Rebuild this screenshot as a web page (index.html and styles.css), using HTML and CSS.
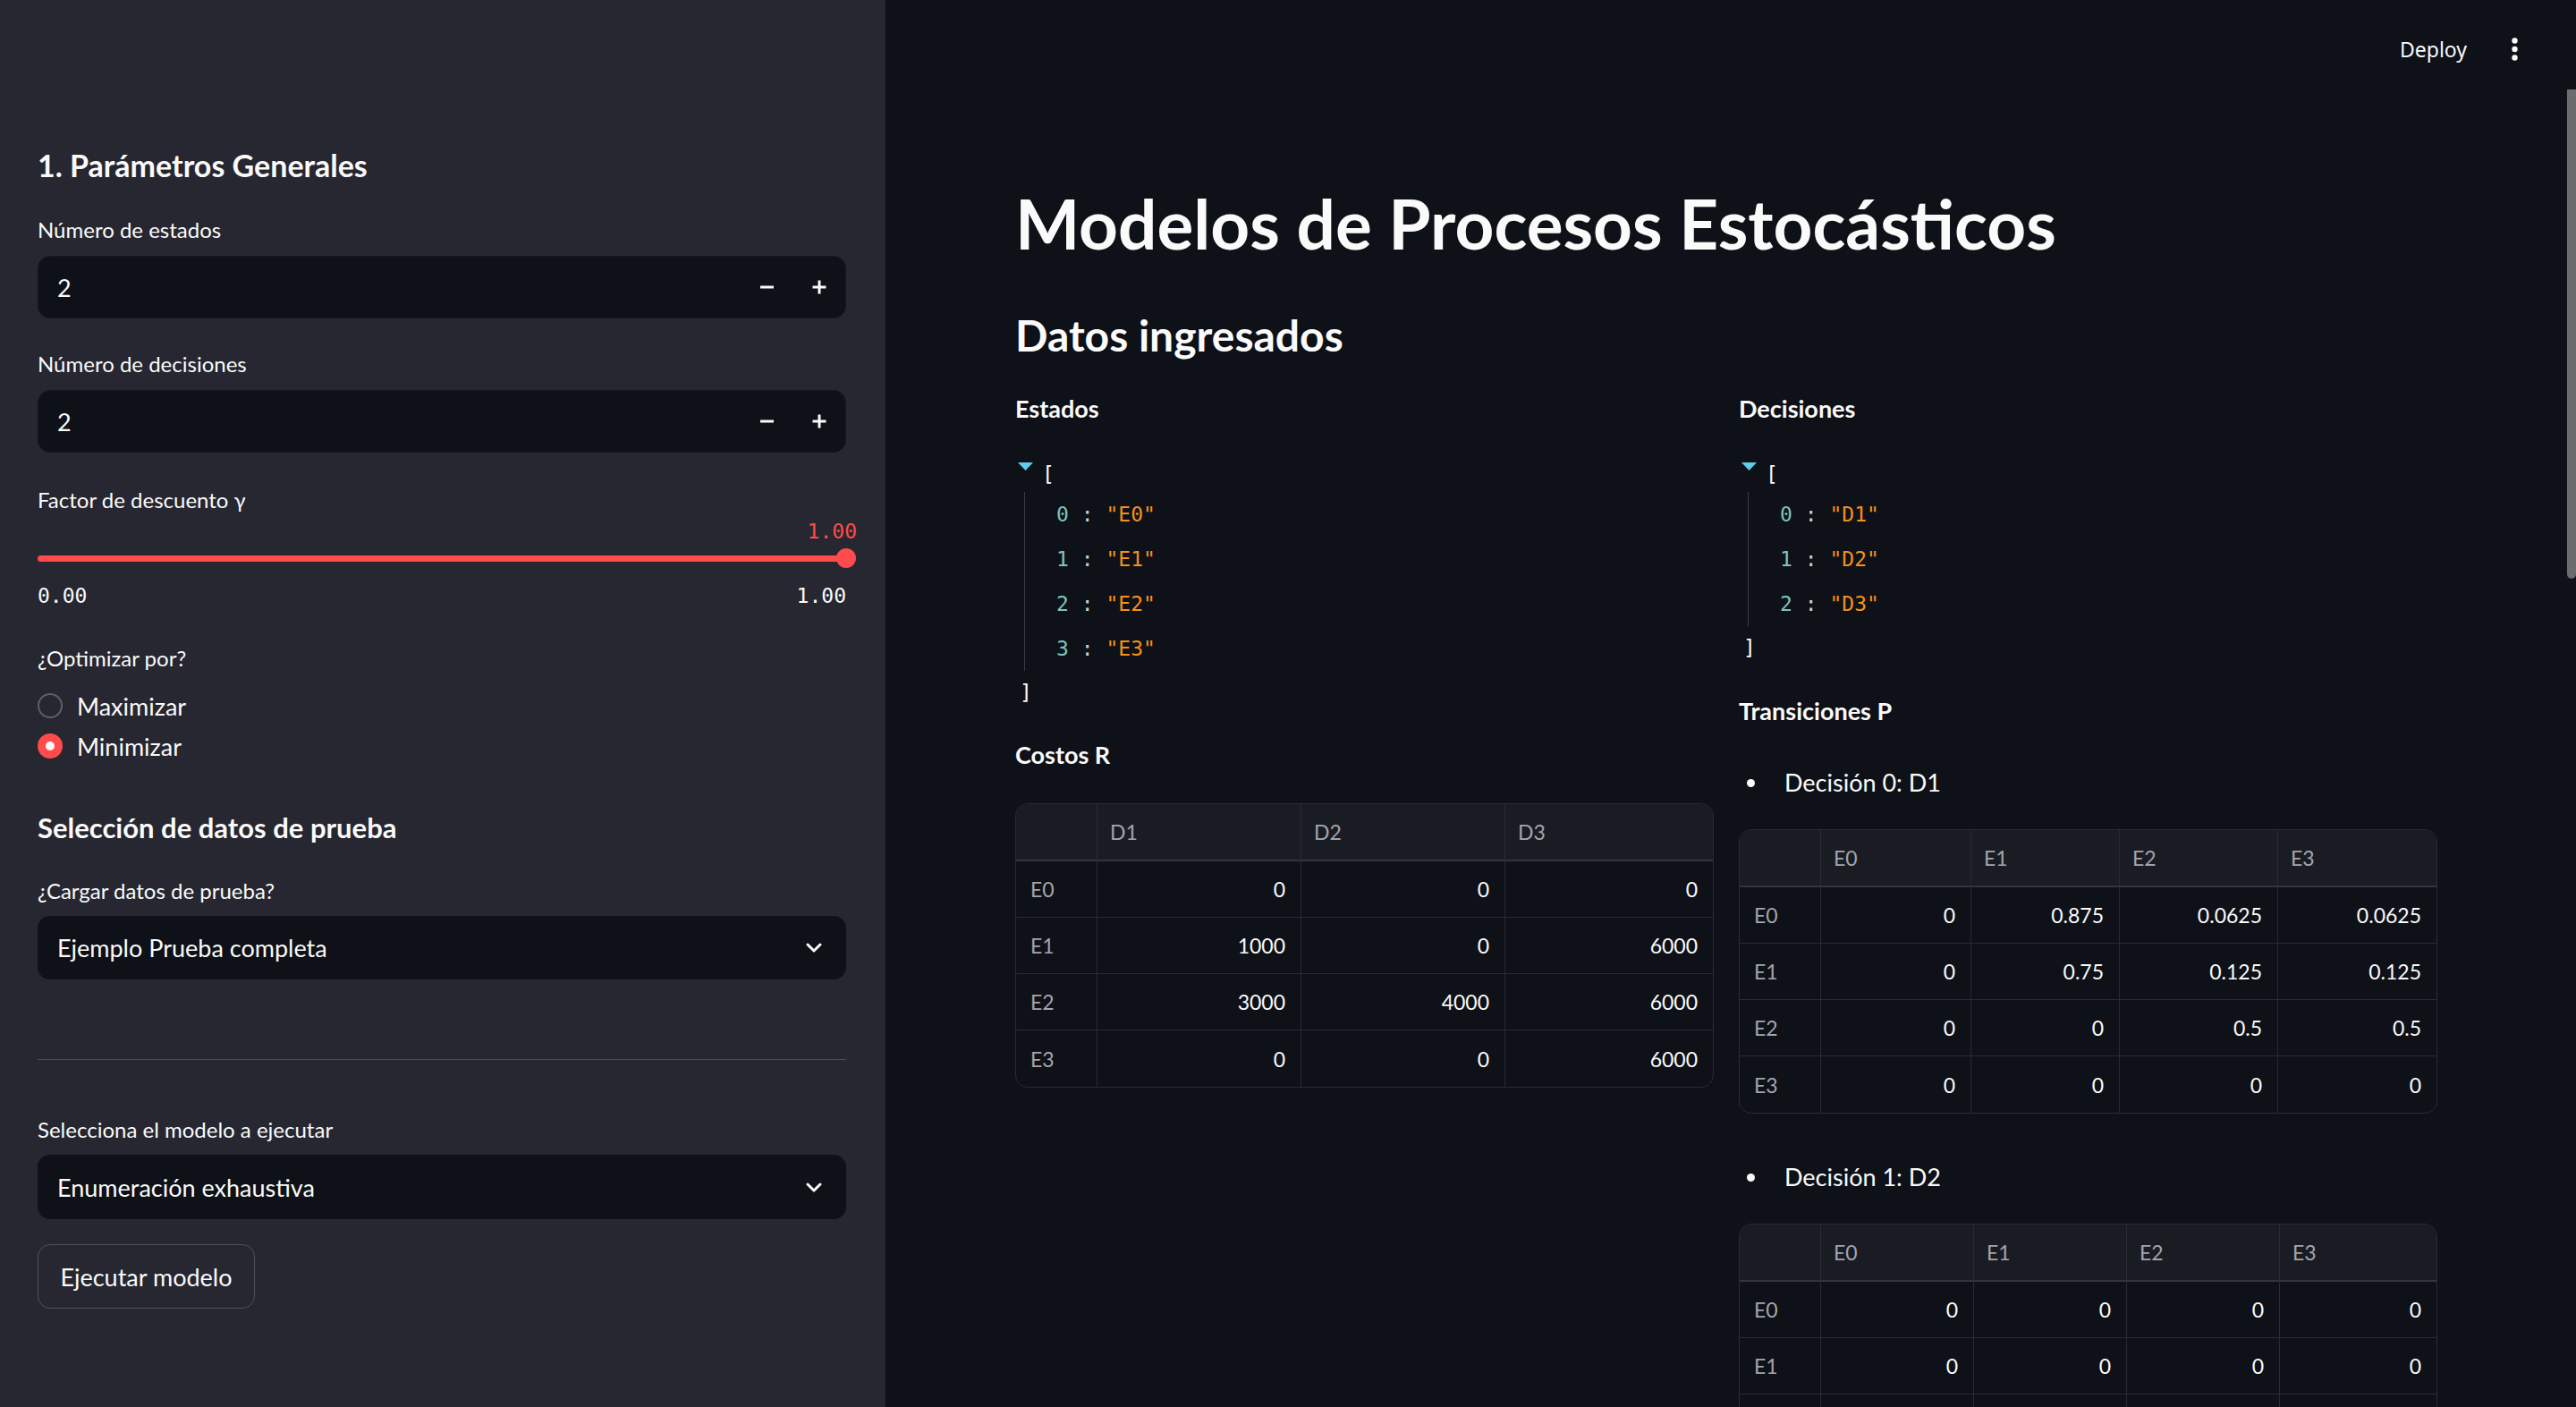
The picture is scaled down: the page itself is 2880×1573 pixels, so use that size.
FILE: index.html
```html
<!DOCTYPE html>
<html lang="es">
<head>
<meta charset="utf-8">
<title>Modelos de Procesos Estocásticos</title>
<link rel="stylesheet" href="styles.css">
</head>
<body>
<aside class="sidebar">
  <h2 class="sb-heading sb-heading-1">1. Parámetros Generales</h2>

  <div class="lbl lbl-1">Número de estados</div>
  <div class="num-input ni-1">
    <span class="num-value">2</span>
    <span class="step"><svg width="16" height="4" viewBox="0 0 16 4"><rect x="0" y="0.5" width="15" height="3" fill="#fafafa"/></svg></span>
    <span class="step"><svg width="16" height="16" viewBox="0 0 16 16"><rect x="0.5" y="6.5" width="15" height="3" fill="#fafafa"/><rect x="6.5" y="0.5" width="3" height="15" fill="#fafafa"/></svg></span>
  </div>

  <div class="lbl lbl-2">Número de decisiones</div>
  <div class="num-input ni-2">
    <span class="num-value">2</span>
    <span class="step"><svg width="16" height="4" viewBox="0 0 16 4"><rect x="0" y="0.5" width="15" height="3" fill="#fafafa"/></svg></span>
    <span class="step"><svg width="16" height="16" viewBox="0 0 16 16"><rect x="0.5" y="6.5" width="15" height="3" fill="#fafafa"/><rect x="6.5" y="0.5" width="3" height="15" fill="#fafafa"/></svg></span>
  </div>

  <div class="lbl lbl-3">Factor de descuento γ</div>
  <div class="slider">
    <div class="slider-value">1.00</div>
    <div class="track"><span class="track-bar"></span><span class="thumb"></span></div>
    <div class="ticks"><span>0.00</span><span>1.00</span></div>
  </div>

  <div class="lbl lbl-4">¿Optimizar por?</div>
  <div class="radio radio-1"><span class="radio-circle"></span><span>Maximizar</span></div>
  <div class="radio radio-2"><span class="radio-circle on"><span class="radio-dot"></span></span><span>Minimizar</span></div>

  <h3 class="sb-heading sb-heading-2">Selección de datos de prueba</h3>
  <div class="lbl lbl-5">¿Cargar datos de prueba?</div>
  <div class="select sel-1">
    <span>Ejemplo Prueba completa</span>
    <svg width="18" height="11" viewBox="0 0 18 11"><path d="M2 2 L9 9 L16 2" fill="none" stroke="#fafafa" stroke-width="3" stroke-linecap="round" stroke-linejoin="round"/></svg>
  </div>

  <div class="divider"></div>

  <div class="lbl lbl-6">Selecciona el modelo a ejecutar</div>
  <div class="select sel-2">
    <span>Enumeración exhaustiva</span>
    <svg width="18" height="11" viewBox="0 0 18 11"><path d="M2 2 L9 9 L16 2" fill="none" stroke="#fafafa" stroke-width="3" stroke-linecap="round" stroke-linejoin="round"/></svg>
  </div>

  <div class="btn">Ejecutar modelo</div>
</aside>

<main class="main">
  <header class="topbar">
    <span class="deploy">Deploy</span>
    <svg class="kebab" width="7" height="27" viewBox="0 0 7 27"><circle cx="3.5" cy="3.5" r="3.2" fill="#fafafa"/><circle cx="3.5" cy="13" r="3.2" fill="#fafafa"/><circle cx="3.5" cy="22.5" r="3.2" fill="#fafafa"/></svg>
  </header>

  <div class="content">
    <h1 class="title">Modelos de Procesos Estocásticos</h1>
    <h2 class="h2">Datos ingresados</h2>

    <div class="cols">
      <div class="col">
        <div class="sub">Estados</div>
        <div class="json">
          <div class="json-open"><svg class="tri" width="17" height="9" viewBox="0 0 17 9"><path d="M0 0 H17 L8.5 9 Z" fill="#5ecfea"/></svg><span class="br">[</span></div>
          <div class="json-items">
            <div class="ji"><span class="k">0</span> <span class="cl">:</span> <span class="s">"E0"</span></div>
            <div class="ji"><span class="k">1</span> <span class="cl">:</span> <span class="s">"E1"</span></div>
            <div class="ji"><span class="k">2</span> <span class="cl">:</span> <span class="s">"E2"</span></div>
            <div class="ji"><span class="k">3</span> <span class="cl">:</span> <span class="s">"E3"</span></div>
          </div>
          <div class="json-close">]</div>
        </div>

        <div class="sub sub-gap">Costos R</div>
        <div class="df df-costos gap-costos">
          <div class="c h"></div><div class="c h">D1</div><div class="c h">D2</div><div class="c h last">D3</div>
          <div class="c i">E0</div><div class="c">0</div><div class="c">0</div><div class="c last">0</div>
          <div class="c i">E1</div><div class="c">1000</div><div class="c">0</div><div class="c last">6000</div>
          <div class="c i">E2</div><div class="c">3000</div><div class="c">4000</div><div class="c last">6000</div>
          <div class="c i end">E3</div><div class="c end">0</div><div class="c end">0</div><div class="c last end">6000</div>
        </div>
      </div>

      <div class="col">
        <div class="sub">Decisiones</div>
        <div class="json">
          <div class="json-open"><svg class="tri" width="17" height="9" viewBox="0 0 17 9"><path d="M0 0 H17 L8.5 9 Z" fill="#5ecfea"/></svg><span class="br">[</span></div>
          <div class="json-items">
            <div class="ji"><span class="k">0</span> <span class="cl">:</span> <span class="s">"D1"</span></div>
            <div class="ji"><span class="k">1</span> <span class="cl">:</span> <span class="s">"D2"</span></div>
            <div class="ji"><span class="k">2</span> <span class="cl">:</span> <span class="s">"D3"</span></div>
          </div>
          <div class="json-close">]</div>
        </div>

        <div class="sub sub-gap-r">Transiciones P</div>
        <ul class="bullets b-1"><li><span class="dot"></span>Decisión 0: D1</li></ul>
        <div class="df df-p0 gap-t">
          <div class="c h"></div><div class="c h">E0</div><div class="c h">E1</div><div class="c h">E2</div><div class="c h last">E3</div>
          <div class="c i">E0</div><div class="c">0</div><div class="c">0.875</div><div class="c">0.0625</div><div class="c last">0.0625</div>
          <div class="c i">E1</div><div class="c">0</div><div class="c">0.75</div><div class="c">0.125</div><div class="c last">0.125</div>
          <div class="c i">E2</div><div class="c">0</div><div class="c">0</div><div class="c">0.5</div><div class="c last">0.5</div>
          <div class="c i end">E3</div><div class="c end">0</div><div class="c end">0</div><div class="c end">0</div><div class="c last end">0</div>
        </div>

        <ul class="bullets b-2"><li><span class="dot"></span>Decisión 1: D2</li></ul>
        <div class="df df-p1 gap-t">
          <div class="c h"></div><div class="c h">E0</div><div class="c h">E1</div><div class="c h">E2</div><div class="c h last">E3</div>
          <div class="c i">E0</div><div class="c">0</div><div class="c">0</div><div class="c">0</div><div class="c last">0</div>
          <div class="c i">E1</div><div class="c">0</div><div class="c">0</div><div class="c">0</div><div class="c last">0</div>
          <div class="c i">E2</div><div class="c">0</div><div class="c">0</div><div class="c">0</div><div class="c last">0</div>
        </div>
      </div>
    </div>
  </div>

  <div class="scrollbar"></div>
</main>
</body>
</html>
```

FILE: styles.css
```css
* { box-sizing: border-box; }

html, body {
  margin: 0;
  padding: 0;
}

body {
  display: flex;
  width: 2880px;
  height: 1573px;
  overflow: hidden;
  background: #0e1117;
  color: #fafafa;
  font-family: Lato, "Noto Sans", sans-serif;
}

/* ---------- Sidebar ---------- */
.sidebar {
  width: 990px;
  flex: none;
  background: #262730;
  padding: 164px 44px 0 42px;
  display: flex;
  flex-direction: column;
}

.sb-heading {
  margin: 0;
  font-size: 31px;
  font-weight: 700;
  line-height: 38px;
}
.sb-heading-1 {
  font-size: 34px;
  line-height: 42px;
}
.sb-heading-2 { margin-top: 52px; }

.lbl {
  font-size: 24px;
  line-height: 34px;
}
.lbl-1 { margin-top: 34px; }
.lbl-2 { margin-top: 34px; }
.lbl-3 { margin-top: 36px; }
.lbl-4 { margin-top: 38px; }
.lbl-5 { margin-top: 35px; }
.lbl-6 { margin-top: 61px; }

.num-input {
  height: 70px;
  margin-top: 12px;
  background: #0e1117;
  border: 1px solid #15171e;
  border-radius: 14px;
  display: flex;
  align-items: center;
}
.num-value {
  flex: 1;
  padding-left: 21px;
  font-size: 27px;
}
.step {
  width: 58px;
  height: 100%;
  display: flex;
  align-items: center;
  justify-content: center;
}

.slider { display: flex; flex-direction: column; }
.slider-value {
  margin-top: 3px;
  margin-right: -12px;
  text-align: right;
  font-family: "DejaVu Sans Mono", monospace;
  font-size: 23px;
  line-height: 30px;
  color: #ff4b4b;
}
.track {
  margin-top: 4px;
  height: 22px;
  display: flex;
  align-items: center;
}
.track-bar {
  flex: 1;
  height: 7px;
  border-radius: 4px;
  background: #ff4b4b;
}
.thumb {
  width: 22px;
  height: 22px;
  flex: none;
  border-radius: 50%;
  background: #ff4b4b;
  margin: 0 -11px;
}
.ticks {
  margin-top: 16px;
  display: flex;
  justify-content: space-between;
  font-family: "DejaVu Sans Mono", monospace;
  font-size: 23px;
  line-height: 30px;
}

.radio {
  height: 40px;
  display: flex;
  align-items: center;
  gap: 16px;
  font-size: 27px;
}
.radio-1 { margin-top: 16px; }
.radio-2 { margin-top: 5px; }
.radio-circle {
  width: 28px;
  height: 28px;
  flex: none;
  border-radius: 50%;
  border: 2px solid #5d5e66;
  display: flex;
  align-items: center;
  justify-content: center;
}
.radio-circle.on {
  background: #ff4b4b;
  border-color: #ff4b4b;
}
.radio-dot {
  width: 10px;
  height: 10px;
  border-radius: 50%;
  background: #fafafa;
}

.select {
  height: 71px;
  background: #0e1117;
  border-radius: 14px;
  display: flex;
  align-items: center;
  justify-content: space-between;
  padding: 0 27px 0 22px;
  font-size: 27px;
}
.sel-1 { margin-top: 11px; }
.sel-2 { margin-top: 11px; height: 72px; }

.divider {
  margin-top: 89px;
  height: 1px;
  background: #4a4b53;
}

.btn {
  margin-top: 28px;
  width: 243px;
  height: 72px;
  border: 1px solid #50515a;
  border-radius: 14px;
  display: flex;
  align-items: center;
  justify-content: center;
  font-size: 27px;
}

/* ---------- Main ---------- */
.main {
  flex: 1;
  position: relative;
  display: flex;
  flex-direction: column;
  overflow: hidden;
}

.topbar {
  height: 110px;
  flex: none;
  display: flex;
  align-items: center;
  justify-content: flex-end;
  gap: 50px;
  padding-right: 65px;
}
.deploy {
  font-family: "Noto Sans", sans-serif;
  font-size: 23px;
}

.content {
  padding-left: 145px;
  width: 1736px;
}

.title {
  margin: 94px 0 0;
  font-size: 76.5px;
  line-height: 90px;
  font-weight: 700;
}
.h2 {
  margin: 52px 0 0;
  font-size: 48px;
  line-height: 58px;
  font-weight: 700;
}

.cols {
  margin-top: 35px;
  display: grid;
  grid-template-columns: 781px 781px;
  column-gap: 28px;
  align-items: start;
}
.col { display: flex; flex-direction: column; }

.sub {
  font-size: 27px;
  line-height: 36px;
  font-weight: 700;
}
.sub-gap { margin-top: 28px; }
.sub-gap-r { margin-top: 29px; }

/* JSON viewer */
.json {
  margin-top: 35px;
  font-family: "DejaVu Sans Mono", monospace;
  font-size: 23px;
}
.json-open {
  height: 40px;
  display: flex;
  align-items: center;
}
.tri {
  align-self: flex-start;
  margin: 7px 0 0 3px;
}
.br { margin-left: 10px; line-height: 40px; }
.json-items {
  margin-left: 10px;
  border-left: 1px solid #3a3c44;
  padding-left: 35px;
}
.ji { line-height: 50px; white-space: pre; }
.k { color: #7ec4bc; }
.cl { color: #d0d0d0; }
.s { color: #f5901d; }
.json-close {
  line-height: 48px;
  margin-left: 5px;
}

/* bullets */
.bullets {
  list-style: none;
  margin: 0;
  padding: 0;
  font-size: 27px;
  line-height: 40px;
}
.bullets li { display: flex; align-items: center; }
.dot {
  width: 9px;
  height: 9px;
  border-radius: 50%;
  background: #fafafa;
  margin: 0 33px 0 9px;
}
.b-1 { margin-top: 42px; }
.b-2 { margin-top: 51px; }

/* data tables */
.df {
  display: grid;
  border: 1px solid #292b32;
  border-radius: 14px;
  overflow: hidden;
  font-size: 23px;
}
.gap-costos { margin-top: 36px; }
.gap-t { margin-top: 32px; }
.df-costos { grid-template-columns: 91px 228px 228px 232px; }
.df-p0 { grid-template-columns: 91px 168px 166px 177px 177px; }
.df-p1 { grid-template-columns: 91px 171px 171px 171px 175px; }

.c {
  height: 63px;
  display: flex;
  align-items: center;
  justify-content: flex-end;
  padding: 0 17px 0 16px;
  border-right: 1px solid #292b32;
  border-bottom: 1px solid #292b32;
  white-space: nowrap;
}
.c.last { border-right: none; }
.c.end { border-bottom: none; }
.c.h {
  height: 64px;
  justify-content: flex-start;
  padding-left: 14px;
  background: #1a1c24;
  color: #a3a5ad;
  border-bottom: 2px solid #33353c;
}
.c.i {
  justify-content: flex-start;
  color: #a3a5ad;
}

.scrollbar {
  position: absolute;
  right: 0;
  top: 100px;
  width: 10px;
  height: 547px;
  background: #6b6c70;
  border-radius: 0 0 5px 5px;
}
```
